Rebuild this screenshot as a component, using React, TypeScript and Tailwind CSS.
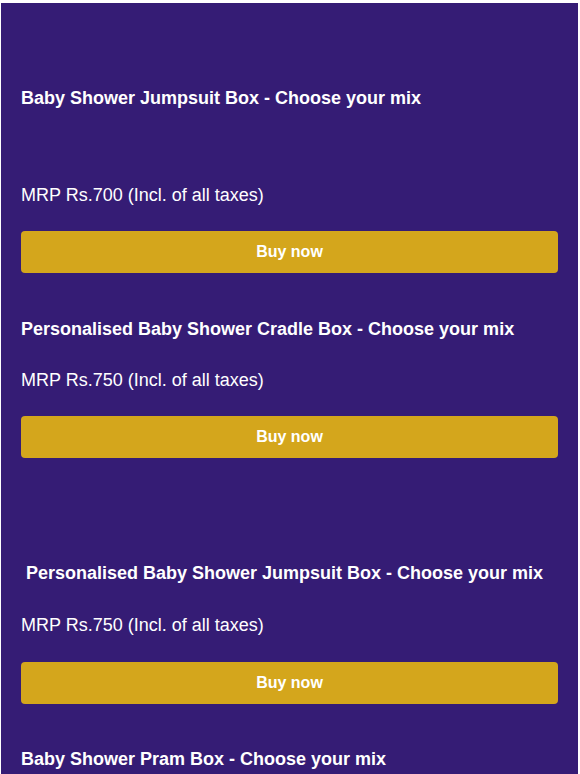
import React from 'react';

type Item = { title: string; price: string; titleClass: string; priceClass: string; buttonClass: string };

const items: Item[] = [
    { title: 'Baby Shower Jumpsuit Box - Choose your mix', price: 'MRP Rs.700 (Incl. of all taxes)', titleClass: 'mt-[82px]', priceClass: 'mt-[70px]', buttonClass: 'mt-[22px]' },
    { title: 'Personalised Baby Shower Cradle Box - Choose your mix', price: 'MRP Rs.750 (Incl. of all taxes)', titleClass: 'mt-[43px]', priceClass: 'mt-[24px]', buttonClass: 'mt-[22px]' },
    { title: '\u00a0Personalised Baby Shower Jumpsuit Box - Choose your mix', price: 'MRP Rs.750 (Incl. of all taxes)', titleClass: 'mt-[102px]', priceClass: 'mt-[25px]', buttonClass: 'mt-[23px]' },
];

const BuyButton: React.FC<{ className: string }> = ({ className }) => (
    <a href="#" className={`${className} flex h-[42px] items-center justify-center rounded-[4px] bg-[#d4a61c] text-[16px] font-bold text-white`}>
        Buy now
    </a>
);

export default function App() {
    return (
        <div className="min-h-screen bg-white pt-[3px] pl-px pr-[2px]" style={{ fontFamily: '"Liberation Sans", Arial, sans-serif' }}>
            <div className="h-[771px] overflow-hidden bg-[#351c75] px-[20px]">
                {items.map((item, i) => (
                    <div key={i}>
                        <h2 className={`${item.titleClass} text-[18px] leading-[27px] font-bold text-white whitespace-pre`}>{item.title}</h2>
                        <p className={`${item.priceClass} text-[18px] leading-[27px] text-white`}>{item.price}</p>
                        <BuyButton className={item.buttonClass} />
                    </div>
                ))}
                <h2 className="mt-[42px] text-[18px] leading-[27px] font-bold text-white">Baby Shower Pram Box - Choose your mix</h2>
            </div>
        </div>
    );
}
